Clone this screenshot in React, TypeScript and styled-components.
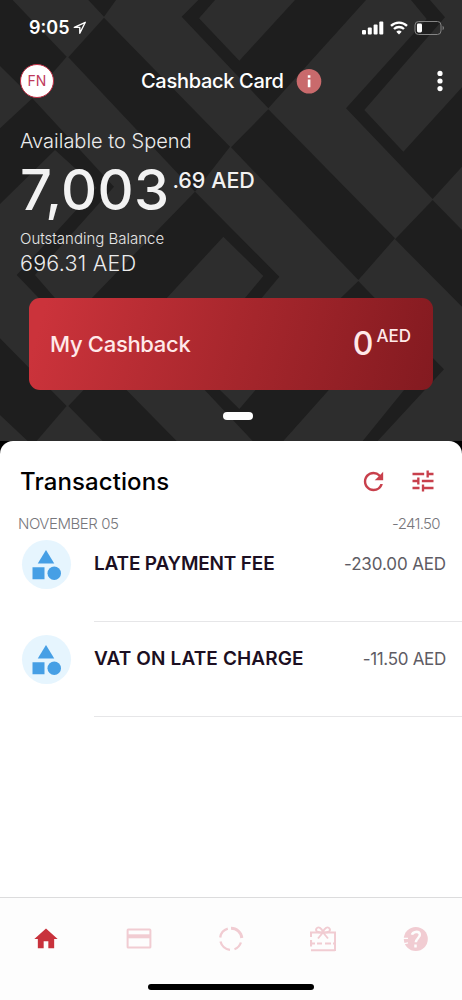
import React from "react";
import styled, { createGlobalStyle } from "styled-components";
import { MdCategory, MdHome, MdRefresh, MdTune } from "react-icons/md";

const GlobalStyle = createGlobalStyle`
  * { box-sizing: border-box; }
  body { margin: 0; background: #fff; font-family: Inter, "Liberation Sans", sans-serif; }
`;

const Screen = styled.div`
  width: 462px;
  height: 1000px;
  display: flex;
  flex-direction: column;
  background: #000;
  overflow: hidden;
`;

const Hero = styled.header`
  position: relative;
  isolation: isolate;
  height: 441px;
  flex: none;
  display: flex;
  flex-direction: column;
  background: #2d2d2d;
  color: #fff;
`;

const Backdrop = styled.svg`
  position: absolute;
  inset: 0;
  z-index: -1;
`;

const Text = styled.span<{ $size: number; $line: number; $weight?: number; $track?: number; $color?: string }>`
  display: block;
  white-space: nowrap;
  font-size: ${(p) => p.$size}px;
  line-height: ${(p) => p.$line}px;
  font-weight: ${(p) => p.$weight ?? 400};
  letter-spacing: ${(p) => p.$track ?? 0}px;
  color: ${(p) => p.$color ?? "inherit"};
`;

const StatusBar = styled.div`
  height: 56px;
  padding: 0 17px 0 29px;
  display: flex;
  align-items: center;
  justify-content: space-between;
`;

const StatusGroup = styled.div<{ $gap: number }>`
  display: flex;
  align-items: center;
  gap: ${(p) => p.$gap}px;
`;

const TitleBar = styled.div`
  height: 50px;
  padding: 0 17px 0 20px;
  display: grid;
  grid-template-columns: 121px auto 1fr auto;
  align-items: center;
`;

const Avatar = styled.div`
  width: 34px;
  height: 34px;
  border-radius: 50%;
  border: 1.5px solid #c22f45;
  background: #fff;
  display: grid;
  place-items: center;
`;

const InfoBadge = styled.svg`
  margin-left: 12px;
  display: block;
`;

const Balance = styled.section`
  padding: 22px 20px 0;
  height: 192px;
`;

const Amount = styled.div`
  display: flex;
  gap: 3px;
  height: 75px;
`;

const CashbackCard = styled.section`
  margin: 0 29px;
  height: 92px;
  padding: 0 22px 0 21px;
  border-radius: 11px;
  background: linear-gradient(105deg, #cb333b 4%, #a8272d 50%, #831a20 100%);
  display: flex;
  align-items: center;
  justify-content: space-between;
  color: #ffe9e9;
`;

const CashbackValue = styled.div`
  display: flex;
  gap: 3px;
`;

const PageMark = styled.div`
  width: 30px;
  height: 8px;
  border-radius: 4px;
  background: #fff;
  margin: 22px 0 0 223px;
`;

const Sheet = styled.main`
  flex: 1;
  background: #fff;
  border-radius: 13px 13px 0 0;
  padding-top: 19px;
`;

const SheetHeader = styled.div`
  height: 43px;
  padding: 0 25px 0 20px;
  display: flex;
  justify-content: space-between;
  align-items: center;
`;

const Actions = styled.div`
  display: flex;
  gap: 21px;
  color: #c8404c;
  svg { display: block; }
`;

const DateRow = styled.div`
  height: 24px;
  padding: 0 22px 0 18px;
  display: flex;
  justify-content: space-between;
  align-items: flex-end;
`;

const Entry = styled.article`
  height: 95px;
  padding: 0 0 0 22px;
  display: flex;
  gap: 23px;
`;

const CategoryIcon = styled.div`
  width: 49px;
  height: 49px;
  margin-top: 13px;
  border-radius: 50%;
  background: #e6f5fe;
  color: #469fe5;
  display: grid;
  place-items: center;
  padding-right: 1px;
  svg { display: block; }
`;

const EntryBody = styled.div`
  flex: 1;
  display: flex;
  justify-content: space-between;
  padding: 24px 16px 0 0;
  border-bottom: 1px solid #e6e6e8;
`;

const Dock = styled.footer`
  height: 103px;
  flex: none;
  border-top: 1px solid #dcdcdd;
  background: #fdfdfd;
  display: flex;
  flex-direction: column;
  align-items: center;
`;

const Tabs = styled.nav`
  width: 462px;
  height: 86px;
  display: grid;
  grid-template-columns: repeat(5, 1fr);
  align-items: center;
  justify-items: center;
  padding-bottom: 5px;
`;

const Tab = styled.div<{ $active?: boolean }>`
  color: ${(p) => (p.$active ? "#c8323c" : "#f1ccd2")};
  svg { display: block; }
`;

const HomeIndicator = styled.div`
  width: 166px;
  height: 6px;
  border-radius: 3px;
  background: #000;
`;

const darkShapes = [
  "0,0 38,0 200,170 95,292 0,198",
  "265,0 348,0 312,50",
  "312,53 690,440 585,575 205,172",
  "595,0 645,0 597,55 718,182 885,0 1098,0 805,325 545,50",
  "805,328 1185,715 1075,840 693,442",
  "1233,0 1290,0 1335,52 1093,330 1210,455 1386,262 1386,500 1298,597 1038,325 1280,57",
  "1298,600 1386,690 1386,920 1185,718",
  "585,575 838,830 780,900 730,900 790,828 670,710 495,900 270,900",
  "1075,843 1130,900 1016,900",
  "97,295 342,560 105,825 170,900 122,900 50,825 290,563 165,450 0,612 0,385",
  "0,1015 200,1218 110,1323 83,1323 0,1245",
  "205,1218 260,1160 370,1160 530,1323 308,1323",
  "605,1160 650,1160 718,1227 775,1160 995,1160 850,1323 758,1323",
  "1295,1070 1332,1108 1133,1323 1088,1323 1220,1160 1295,1080",
];

const entries = [
  { name: "LATE PAYMENT FEE", amount: "-230.00 AED", track: -0.18, amountTrack: -0.12 },
  { name: "VAT ON LATE CHARGE", amount: "-11.50 AED", track: 0.12, amountTrack: -0.3 },
];

export default function App() {
  return (
    <Screen>
      <GlobalStyle />
      <Hero>
        <Backdrop width="462" height="441" viewBox="0 0 1386 1323">
          {darkShapes.map((points) => (
            <polygon key={points} points={points} fill="#1e1e1e" />
          ))}
        </Backdrop>
        <StatusBar>
          <StatusGroup $gap={4}>
            <Text $size={18} $line={24} $weight={600}>9:05</Text>
            <svg width="14" height="14" viewBox="0 0 14 14" fill="none" stroke="#fff" strokeWidth="1.4" strokeLinejoin="round">
              <path d="M12.3 1.3 1.3 6.4h5.5v5.8z" />
            </svg>
          </StatusGroup>
          <StatusGroup $gap={6}>
            <svg width="22" height="14" viewBox="0 0 22 14" fill="#fff">
              <rect x="0" y="9" width="4" height="4.5" rx="1" />
              <rect x="5.8" y="6.5" width="4" height="7" rx="1" />
              <rect x="11.6" y="3.5" width="4" height="10" rx="1" />
              <rect x="17.3" y="0.5" width="4" height="13" rx="1" />
            </svg>
            <svg width="18" height="14" viewBox="0 0 18 14" fill="none" stroke="#fff" strokeWidth="2.3">
              <path d="M1 4.8a11.5 11.5 0 0 1 16 0M4 8a7.2 7.2 0 0 1 10 0" />
              <path d="M9 13.4 6.3 10.7a3.9 3.9 0 0 1 5.4 0z" fill="#fff" stroke="none" />
            </svg>
            <svg width="31" height="14" viewBox="0 0 31 14">
              <rect x="1" y="0.5" width="26" height="13" rx="3.6" fill="none" stroke="#858585" />
              <path d="M28.6 4.8v4.5c1.8-.7 1.8-3.8 0-4.5z" fill="#858585" />
              <rect x="3" y="2.5" width="5" height="9" rx="1.4" fill="#fff" />
            </svg>
          </StatusGroup>
        </StatusBar>
        <TitleBar>
          <Avatar><Text $size={14} $line={18} $color="#c03a5c">FN</Text></Avatar>
          <Text $size={20} $line={26} $weight={500} $track={-0.3}>Cashback Card</Text>
          <InfoBadge width="26" height="26" viewBox="0 0 26 26">
            <circle cx="13" cy="13.3" r="12.3" fill="#c96a6c" />
            <path d="M11.8 7.3h2.6v2.4h-2.6zM11.8 11.5h2.6v7.7h-2.6z" fill="#fff" />
          </InfoBadge>
          <svg width="10" height="22" viewBox="0 0 10 22" fill="#fff">
            <circle cx="5" cy="3.4" r="2.6" />
            <circle cx="5" cy="11" r="2.6" />
            <circle cx="5" cy="18.6" r="2.6" />
          </svg>
        </TitleBar>
        <Balance>
          <Text $size={20} $line={26} $weight={300} $color="#ececec">Available to Spend</Text>
          <Amount>
            <Text $size={56} $line={72} $weight={500} $track={0.3} $color="#f2f2f2">7,003</Text>
            <Text $size={21.5} $line={53} $weight={500} $color="#f2f2f2">.69 AED</Text>
          </Amount>
          <Text $size={15} $line={20} $weight={300} $color="#e6e6e6">Outstanding Balance</Text>
          <Text $size={21.5} $line={29} $weight={300} $track={0.25} $color="#ececec">696.31 AED</Text>
        </Balance>
        <CashbackCard>
          <Text $size={22} $line={28} $weight={500} $track={-0.3}>My Cashback</Text>
          <CashbackValue>
            <Text $size={32} $line={34} $weight={500}>0</Text>
            <Text $size={17} $line={19} $weight={500}>AED</Text>
          </CashbackValue>
        </CashbackCard>
        <PageMark />
      </Hero>
      <Sheet>
        <SheetHeader>
          <Text $size={24} $line={32} $weight={500} $track={0.1} $color="#000">Transactions</Text>
          <Actions>
            <MdRefresh size={29} />
            <MdTune size={28} />
          </Actions>
        </SheetHeader>
        <DateRow>
          <Text $size={15} $line={6} $weight={300} $track={-0.45} $color="#77777c">NOVEMBER 05</Text>
          <Text $size={15} $line={6} $weight={300} $track={-0.65} $color="#77777c">-241.50</Text>
        </DateRow>
        {entries.map((entry) => (
          <Entry key={entry.name}>
            <CategoryIcon><MdCategory size={36} /></CategoryIcon>
            <EntryBody>
              <Text $size={19} $line={26} $weight={600} $track={entry.track} $color="#1c0f22">{entry.name}</Text>
              <Text $size={17} $line={26} $track={entry.amountTrack} $color="#5e5c64">{entry.amount}</Text>
            </EntryBody>
          </Entry>
        ))}
      </Sheet>
      <Dock>
        <Tabs>
          <Tab $active><MdHome size={28} /></Tab>
          <Tab>
            <svg width="26" height="22" viewBox="0 0 26 22" fill="none" stroke="currentColor">
              <rect x="1.6" y="1.6" width="22.8" height="18" rx="0.6" strokeWidth="2" />
              <path d="M1.6 8.3h22.8" strokeWidth="4" />
            </svg>
          </Tab>
          <Tab>
            <svg width="26" height="26" viewBox="0 0 26 26" fill="none" stroke="currentColor">
              <path d="M13 2.2A10.8 10.8 0 0 1 23.8 12" strokeWidth="3" />
              <path d="M2.2 11.5A10.8 10.8 0 0 1 9.8 2.7M2.5 15.5A10.8 10.8 0 0 0 12 23.8M16.5 23.2A10.8 10.8 0 0 0 22.9 16.5" strokeWidth="2.3" />
            </svg>
          </Tab>
          <Tab>
            <svg width="26" height="26" viewBox="0 0 26 26" fill="none" stroke="currentColor">
              <path d="M1 11V6.5h24V25M8 24.3h17M1 24.3h11M1 14v3" strokeWidth="2" />
              <path d="M1 17.5h4m2 0h5m3 0h6m2 0h2M1 20.5V14" strokeWidth="2.2" />
              <path d="M13 6.5C7.5 7 5 5 6.5 2.6S12 1.5 13 6.5c1-5 5-6.3 6.5-3.9S18.5 7 13 6.5zM12.5 7l-4.5 5.5M13.5 7l4.5 5.5" strokeWidth="1.9" />
            </svg>
          </Tab>
          <Tab>
            <svg width="26" height="26" viewBox="0 0 26 26">
              <circle cx="12.8" cy="13" r="12" fill="currentColor" />
              <path d="M0 12.3h5M0 17.8l5-1" stroke="#fdfdfd" strokeWidth="1.2" />
              <path d="M9 8.8c.5-3 6.700-4.300 7.800-.8 1 3.300-3.800 4.300-4 8.300M12.500 18.600v2.800" fill="none" stroke="#fdfdfd" strokeWidth="2.5" />
            </svg>
          </Tab>
        </Tabs>
        <HomeIndicator />
      </Dock>
    </Screen>
  );
}
